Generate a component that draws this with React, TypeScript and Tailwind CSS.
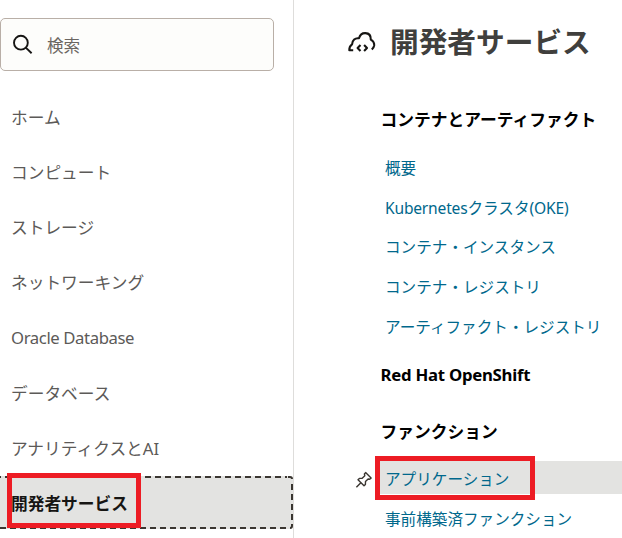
import React from "react";

type MenuItem = { label: string; latin?: boolean };

const menu: MenuItem[] = [
  { label: "ホーム" },
  { label: "コンピュート" },
  { label: "ストレージ" },
  { label: "ネットワーキング" },
  { label: "Oracle Database", latin: true },
  { label: "データベース" },
  { label: "アナリティクスとAI" },
];

const containerLinks = ["コンテナ・インスタンス", "コンテナ・レジストリ", "アーティファクト・レジストリ"];

function SearchIcon() {
  return (
    <svg className="ml-[11px] h-[22px] w-[22px] shrink-0" viewBox="0 0 22 22" fill="none" stroke="#161513" strokeWidth="1.9">
      <circle cx="8.9" cy="8.7" r="6.9" />
      <path d="M13.8 13.6L19.6 19.2" />
    </svg>
  );
}

function CloudCodeIcon() {
  return (
    <svg className="h-[22px] w-[28px] shrink-0" viewBox="0 0 28 22" fill="none" stroke="#161513" strokeWidth="2.1" strokeLinejoin="round">
      <path d="M5.2 19.3H1.3C1.2 16.5 2.2 14.4 4.1 13.3C4.3 9.2 7.1 6.6 11 7.3C12 3.8 14.4 2 17.3 2.1C20.8 2.3 23 4.8 22.8 8.6C25.2 10 26.4 12 26.2 14.4C26 16 25.2 17.2 23.8 18.5" />
      <path d="M12.5 14L9.6 17L12.5 20M16.1 14L19 17L16.1 20" />
    </svg>
  );
}

function PinIcon() {
  return (
    <svg className="mt-[4px] h-[18px] w-[18px] shrink-0" viewBox="0 0 18 18" fill="none" stroke="#3a3631" strokeWidth="1.4" strokeLinejoin="round">
      <path d="M10.6 1.6L16.1 7.1L14.6 8.3L13.1 8L10.5 10.6L10.4 13.4L9 14.8L3 8.8L4.4 7.4L7.2 7.2L9.8 4.7L9.4 3Z" />
      <path d="M5.9 11.8L1.4 16.3" />
    </svg>
  );
}

function FocusRing() {
  return (
    <svg className="absolute inset-0 h-[53px] w-[293px]" viewBox="0 0 293 53" fill="none" stroke="#3a3631" strokeWidth="2">
      <path d="M-5 1H287" strokeDasharray="6 4" />
      <path d="M-10 52H287" strokeDasharray="6 4" />
      <path d="M292 8V46" strokeDasharray="6 4" />
      <path d="M288 1H290Q292 1 292 3M292 48V50Q292 52 290 52" />
    </svg>
  );
}

export default function App() {
  return (
    <div className="flex h-[538px] w-[622px] overflow-hidden bg-white font-['Noto_Sans','Noto_Sans_CJK_JP',sans-serif]">
      <aside className="flex h-full w-[294px] shrink-0 flex-col border-r border-[#dedddb] pt-[18px]">
        <div className="flex h-[53px] w-[274px] shrink-0 items-center rounded-[5px] border border-[#b9afa7] bg-[#fdfdfb]">
          <SearchIcon />
          <span className="ml-[13px] pt-0.5 text-[16.6px] leading-6 text-[#6b6661]">検索</span>
        </div>
        <nav className="mt-[19px] flex flex-col text-[16.72px] text-[#5c5a58]">
          {menu.map((item) => (
            <div key={item.label} className="flex h-[55.15px] shrink-0 items-center pl-[11px]">
              <span className={item.latin ? "pb-[1.6px] tracking-[-0.4px]" : "pb-[0.4px]"}>{item.label}</span>
            </div>
          ))}
          <div className="relative flex h-[53px] w-[293px] shrink-0 items-center rounded-r-[3px] bg-[#e3e3e1] pl-[11px] font-bold text-[#161513]">
            <FocusRing />
            <span className="pt-[3px]">開発者サービス</span>
            <div className="absolute -top-[3px] left-[7px] h-[55px] w-[134px] border-[5px] border-[#ed1c24]" />
          </div>
        </nav>
      </aside>
      <main className="flex min-w-0 flex-1 flex-col">
        <header className="flex h-[60px] shrink-0 items-end pb-px pl-[54px]">
          <div className="flex h-[34px] items-center">
            <CloudCodeIcon />
            <h1 className="ml-[14px] text-[28.7px] leading-[34px] font-bold whitespace-nowrap text-[#403f3d]">開発者サービス</h1>
          </div>
        </header>
        <h2 className="mt-[48px] pl-[86.5px] text-[16.75px] leading-6 font-bold whitespace-nowrap text-black">コンテナとアーティファクト</h2>
        <div className="mt-[17px] flex flex-col pl-[91px] text-[15.6px] whitespace-nowrap text-[#00688c]">
          <a className="flex h-[39.7px] items-center">概要</a>
          <a className="flex h-[39.4px] items-center">
            <span className="tracking-[-0.2px]">Kubernetes</span>クラスタ<span className="tracking-[-0.2px]">(OKE)</span>
          </a>
          {containerLinks.map((label) => (
            <a key={label} className="flex h-[39.8px] items-center">{label}</a>
          ))}
        </div>
        <h2 className="mt-[16px] pl-[86.5px] text-[16.75px] leading-6 font-bold tracking-[-0.25px] text-black">Red Hat OpenShift</h2>
        <h2 className="mt-[33px] pl-[86.5px] text-[16.75px] leading-6 font-bold text-black">ファンクション</h2>
        <div className="mt-[17px] flex h-[33px] shrink-0 items-center pl-[61px]">
          <PinIcon />
          <div className="relative ml-[3px] flex h-[33px] flex-1 items-center bg-[#e3e3e1] pl-[9px] text-[15.6px] text-[#00688c]">
            <a className="pt-[3px]">アプリケーション</a>
            <div className="absolute -top-[5px] -left-px h-[44px] w-[160px] border-[5px] border-[#ed1c24]" />
          </div>
        </div>
        <a className="mt-[13px] pl-[91px] text-[15.6px] leading-6 text-[#00688c]">事前構築済ファンクション</a>
      </main>
    </div>
  );
}
